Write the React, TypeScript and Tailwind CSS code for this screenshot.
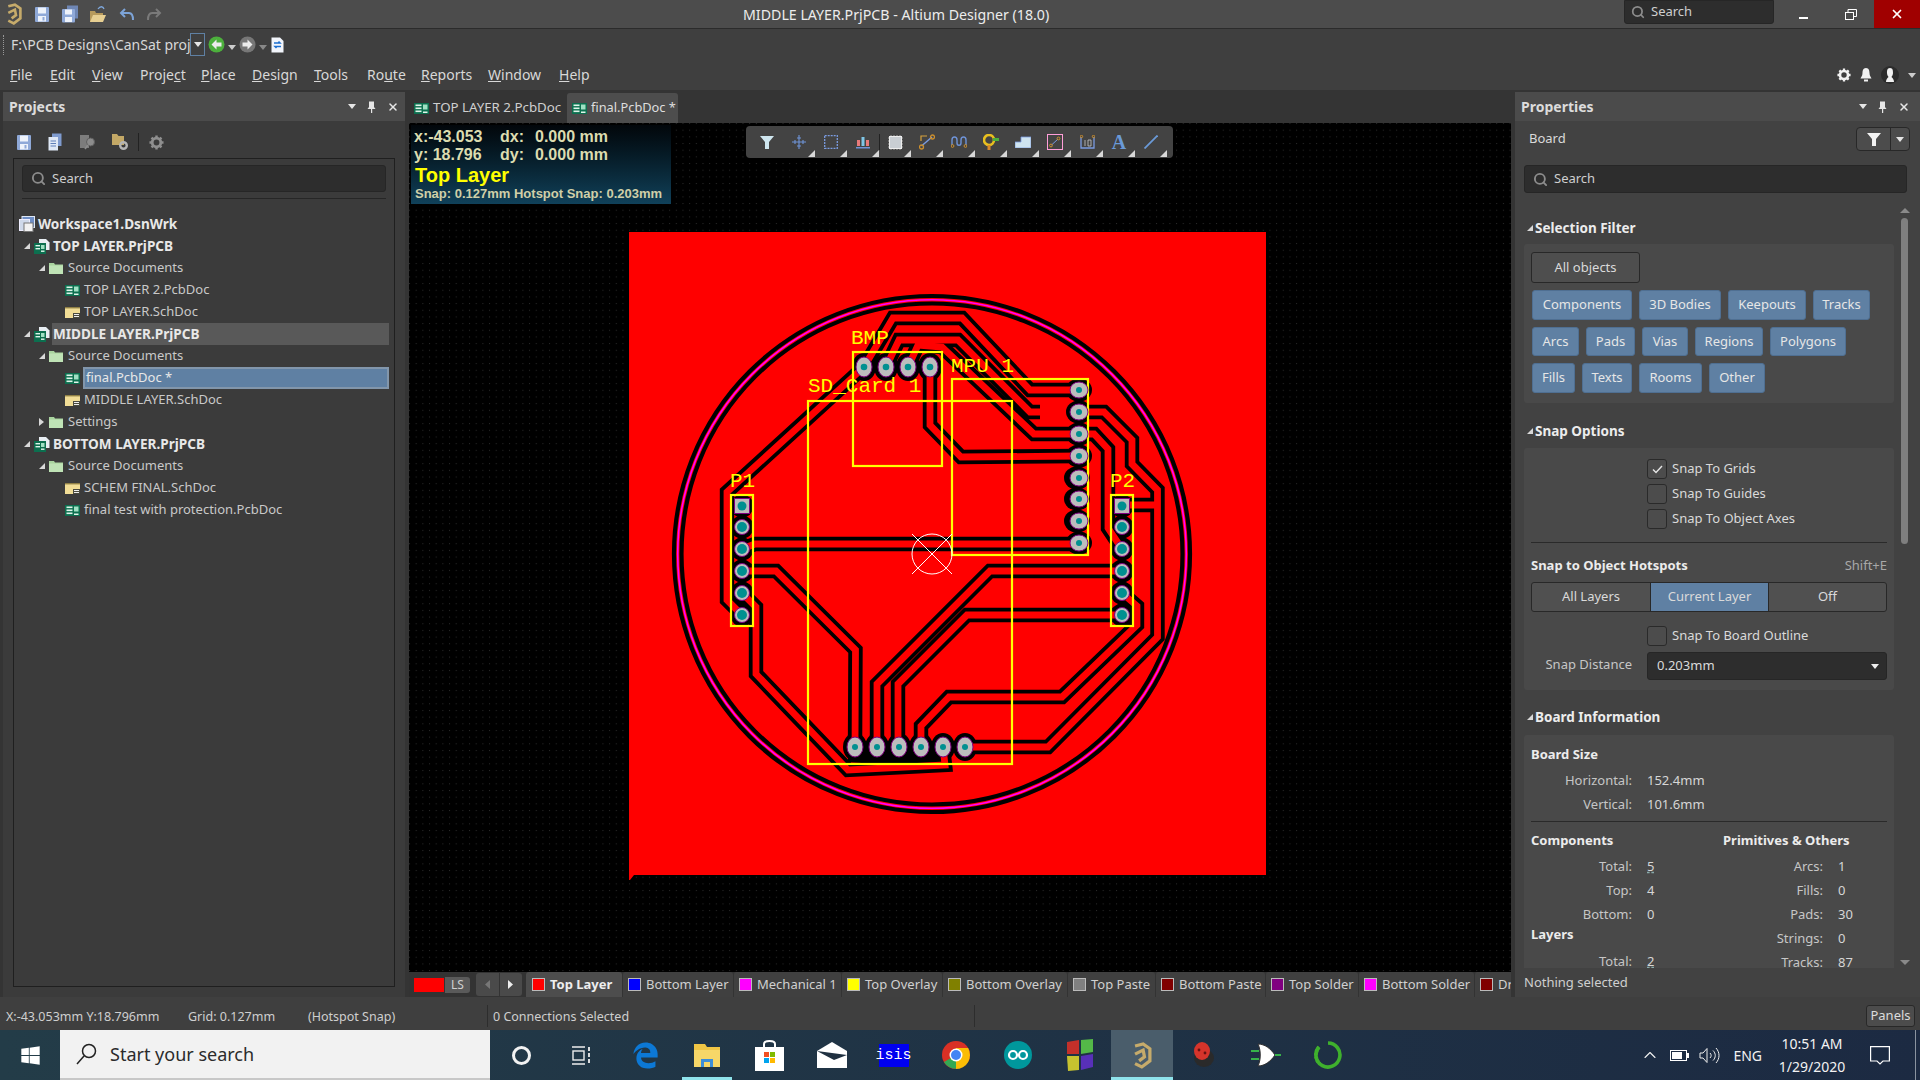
import React from "react";
import { FaEdgeLegacy, FaWindows } from "react-icons/fa6";
import { Search, X, ChevronUp } from "lucide-react";

const Tri = ({ c = "border-t-[#e6e6e6]" }: { c?: string }) => (
  <span className={`inline-block w-0 h-0 border-l-[4px] border-r-[4px] border-t-[5px] border-l-transparent border-r-transparent ${c}`} />
);
const Corner = () => (
  <svg width="7" height="7" className="shrink-0"><polygon points="7,0 7,7 0,7" fill="#d8d8d8" /></svg>
);

const Logo = ({ s = 20 }: { s?: number }) => (
  <svg width={s * 0.8} height={s} viewBox="0 0 16 20" fill="none" stroke="#c6ab6b" strokeWidth="2.4">
    <path d="M3 3 L9 1.5 L14 5 L14 14 L8 18.5 L3 16" />
    <path d="M3 9 L9 6 L10 11 L6 14" />
  </svg>
);
const Floppy = ({ c = "#8fa9d8" }: { c?: string }) => (
  <svg width="16" height="17" viewBox="0 0 16 17"><rect x="1" y="1" width="14" height="15" rx="1" fill={c} /><rect x="4" y="1.5" width="8" height="6" fill="#eef3fb" /><rect x="4" y="10" width="8" height="5.5" fill="#eef3fb" /><rect x="8.5" y="11" width="2" height="3.5" fill={c} /></svg>
);
const Floppies = () => (
  <svg width="18" height="18" viewBox="0 0 18 18"><rect x="6" y="0.5" width="11" height="13" fill="#6e86b4" /><rect x="1" y="4" width="13" height="13.5" rx="1" fill="#8fa9d8" /><rect x="4" y="4.5" width="7" height="5" fill="#eef3fb" /><rect x="4" y="12" width="7" height="5" fill="#eef3fb" /></svg>
);
const Docs = () => (
  <svg width="14" height="18" viewBox="0 0 14 18"><path d="M4 0.5H13.5V13H4Z" fill="#7f9bcf" /><path d="M0.5 4H10V17.5H0.5Z" fill="#dfe8f6" /><path d="M2.5 8H8M2.5 10.5H8M2.5 13H8" stroke="#5f7fb8" /></svg>
);
const GrayFind = () => (
  <svg width="16" height="16" viewBox="0 0 16 16"><path d="M0 1H9V14H0Z" fill="#7c7c7c" /><circle cx="10.5" cy="8" r="4" fill="#8c8c8c" stroke="#5f5f5f" /><path d="M8 11L5 15" stroke="#8c8c8c" strokeWidth="1.6" /></svg>
);
const FolderGear = () => (
  <svg width="17" height="18" viewBox="0 0 17 18"><path d="M0 1H5L6.5 3H12V12H0Z" fill="#c3a866" /><circle cx="11.5" cy="12.5" r="3.3" fill="none" stroke="#b5b5b5" strokeWidth="2.4" /></svg>
);
const OpenFolder = () => (
  <svg width="18" height="17" viewBox="0 0 18 17"><path d="M1 5h5l1 2h7v9H1z" fill="#b79a5c" /><path d="M4 9h13l-3 7H1z" fill="#e7cf92" /><path d="M9 3 C11 0 14 0 15 3" stroke="#7fa8dd" fill="none" strokeWidth="1.3" /></svg>
);
const Arrow = ({ c, flip }: { c: string; flip?: boolean }) => (
  <svg width="16" height="14" viewBox="0 0 16 14" className={flip ? "-scale-x-100" : ""} fill="none" stroke={c} strokeWidth="2"><path d="M6 2 L2 6 L6 10" /><path d="M2 6 H10 C13 6 14 9 14 13" /></svg>
);
const Round = ({ bg, flip }: { bg: string; flip?: boolean }) => (
  <svg width="17" height="17" viewBox="0 0 17 17" className={flip ? "-scale-x-100" : ""}><circle cx="8.5" cy="8.5" r="8" fill={bg} /><path d="M8.5 3.5 L3.5 8.5 L8.5 13.5 V10.5 H13.5 V6.5 H8.5Z" fill="#ececec" /></svg>
);
const RefreshDoc = () => (
  <svg width="13" height="16" viewBox="0 0 13 16"><path d="M0.5 0.5H9L12.5 4V15.5H0.5Z" fill="#f2f5fb" /><path d="M3 6H9L7.5 4.5M10 9.5H4L5.5 11" stroke="#1c6fd0" strokeWidth="1.5" fill="none" /></svg>
);
const Gear = ({ c = "#bdbdbd", s = 15 }: { c?: string; s?: number }) => (
  <svg width={s} height={s} viewBox="0 0 16 16"><circle cx="8" cy="8" r="4.6" fill="none" stroke={c} strokeWidth="3" /><g stroke={c} strokeWidth="2.6"><path d="M8 0.5V3M8 13V15.5M0.5 8H3M13 8H15.5M2.7 2.7L4.4 4.4M11.6 11.6L13.3 13.3M13.3 2.7L11.6 4.4M4.4 11.6L2.7 13.3" /></g></svg>
);
const Pin = () => (
  <svg width="9" height="12" viewBox="0 0 9 12"><path d="M2 0.5H7V6L8.5 8H0.5L2 6Z" fill="#e6e6e6" /><rect x="4" y="8" width="1.2" height="4" fill="#e6e6e6" /></svg>
);
const PanelControls = () => (
  <div className="flex items-center gap-[11px] text-[#e6e6e6]">
    <Tri />
    <Pin />
    <X size={12} strokeWidth={3} />
  </div>
);
const Pcb = () => (
  <svg width="15" height="11" viewBox="0 0 15 11" className="shrink-0"><rect width="15" height="11" fill="#0c6f4f" /><rect x="1.5" y="1.5" width="6" height="1.6" fill="#dff5ea" /><rect x="1.5" y="4.5" width="6" height="1.6" fill="#dff5ea" /><rect x="1.5" y="7.5" width="6" height="1.6" fill="#dff5ea" /><rect x="9" y="1.5" width="4.5" height="5" fill="#9fe0c3" /><rect x="9" y="8.5" width="4.5" height="1.5" fill="#dff5ea" /></svg>
);
const Sch = () => (
  <svg width="15" height="11" viewBox="0 0 15 11" className="shrink-0"><rect width="15" height="11" fill="#f1dd96" /><rect width="15" height="1.4" fill="#8f7f45" /><rect x="8" y="6" width="7" height="5" fill="#4a4a3e" /><rect x="9" y="7" width="5" height="1" fill="#eee" /><rect x="9" y="9" width="5" height="1" fill="#eee" /></svg>
);
const Folder = () => (
  <svg width="14" height="12" viewBox="0 0 14 12" className="shrink-0"><path d="M0 1H5L6 2.5H14V12H0Z" fill="#a9d49f" /><rect y="3.5" width="14" height="8.5" fill="#bfe3b6" /></svg>
);
const Proj = () => (
  <svg width="16" height="15" viewBox="0 0 16 15" className="shrink-0"><path d="M5 0H12L15.5 3.5V11H5Z" fill="#e8eef3" /><rect y="4" width="12" height="11" fill="#0c6f4f" /><rect x="1.5" y="6" width="4.5" height="1.4" fill="#dff5ea" /><rect x="1.5" y="9" width="4.5" height="1.4" fill="#dff5ea" /><rect x="7" y="6" width="3.5" height="4" fill="#9fe0c3" /><rect x="7" y="11.5" width="3.5" height="1.4" fill="#dff5ea" /></svg>
);
const Wks = () => (
  <svg width="16" height="16" viewBox="0 0 16 16" className="shrink-0"><rect x="3" y="0.5" width="12.5" height="11" fill="#6f8fc7" stroke="#dfe8f5" /><rect x="0.5" y="3.5" width="10" height="11" fill="#cfd9ea" stroke="#eef" /><rect x="5" y="7" width="9" height="8.5" fill="#f2f2f2" stroke="#777" /></svg>
);
const Exp = ({ open = true }: { open?: boolean }) =>
  open ? (
    <svg width="6" height="6" viewBox="0 0 6 6" className="shrink-0"><polygon points="6,0 6,6 0,6" fill="#d8d8d8" /></svg>
  ) : (
    <svg width="5" height="8" viewBox="0 0 5 8" className="shrink-0"><polygon points="0,0 5,4 0,8" fill="#d8d8d8" /></svg>
  );

const Row = ({ pl, arrow, icon, text, bold, cls = "", open = true }: { pl: string; arrow?: boolean; icon: React.ReactNode; text: string; bold?: boolean; cls?: string; open?: boolean }) => (
  <div className={`flex h-[22px] items-center -ml-[3px] ${pl}`}>
    {arrow && <span className="flex w-[15px] justify-center"><Exp open={open} /></span>}
    <span className="flex w-[18px] shrink-0">{icon}</span>
    <span className={`flex-1 h-full flex items-center pl-[1px] -mr-[3px] whitespace-nowrap ${bold ? "font-bold text-[13.6px] text-[#e8e8e8]" : "text-[#c9c9c9]"} ${cls}`}>{text}</span>
  </div>
);

const SearchBox = ({ cls }: { cls: string }) => (
  <div className={`flex items-center rounded-[3px] bg-[#2d2d2d] border border-[#262626] text-[#cfcfcf] ${cls}`}>
    <Search size={15} strokeWidth={3} className="text-[#8c8c8c] ml-[8px] mr-[6px]" />
    Search
  </div>
);

const LeftPanel = () => (
  <div className="w-[409px] shrink-0 pl-[3px] pr-[4px] pt-[2px] pb-0 flex flex-col">
    <div className="h-[29px] bg-[#4b4b4b] flex items-center justify-between pl-[6px] pr-[6px]">
      <span className="font-bold text-[14px] text-[#dcdcdc]">Projects</span>
      <PanelControls />
    </div>
    <div className="flex-1 bg-[#3b3b3b] flex flex-col px-[10px] pb-[10px]">
      <div className="h-[37px] pt-[5px] shrink-0 flex items-center relative">
        <span className="absolute left-[3px] top-[13px]"><Floppy /></span>
        <span className="absolute left-[35px] top-[12px]"><Docs /></span>
        <span className="absolute left-[67px] top-[13px]"><GrayFind /></span>
        <span className="absolute left-[99px] top-[12px]"><FolderGear /></span>
        <span className="absolute left-[125px] top-[12px] w-px h-[18px] bg-[#222]" />
        <span className="absolute left-[136px] top-[14px]"><Gear c="#8f8f8f" /></span>
      </div>
      <div className="flex-1 border border-[#1f1f1f] flex flex-col px-[8px]">
        <SearchBox cls="h-[27px] mt-[6px] text-[13px] shrink-0" />
        <div className="h-px bg-[#262626] mt-[6px] mb-[14px] shrink-0" />
        <Row pl="" icon={<Wks />} text="Workspace1.DsnWrk" bold cls="pl-[0px]" />
        <Row pl="" arrow icon={<Proj />} text="TOP LAYER.PrjPCB" bold />
        <Row pl="pl-[15px]" arrow icon={<Folder />} text="Source Documents" />
        <Row pl="pl-[46px]" icon={<Pcb />} text="TOP LAYER 2.PcbDoc" />
        <Row pl="pl-[46px]" icon={<Sch />} text="TOP LAYER.SchDoc" />
        <Row pl="" arrow icon={<Proj />} text="MIDDLE LAYER.PrjPCB" bold cls="bg-[#595959]" />
        <Row pl="pl-[15px]" arrow icon={<Folder />} text="Source Documents" />
        <Row pl="pl-[46px]" icon={<Pcb />} text="final.PcbDoc *" cls="bg-[#5f80a3] border-2 border-[#8296ab] text-[#e8e8e8]" />
        <Row pl="pl-[46px]" icon={<Sch />} text="MIDDLE LAYER.SchDoc" />
        <Row pl="pl-[15px]" arrow open={false} icon={<Folder />} text="Settings" />
        <Row pl="" arrow icon={<Proj />} text="BOTTOM LAYER.PrjPCB" bold />
        <Row pl="pl-[15px]" arrow icon={<Folder />} text="Source Documents" />
        <Row pl="pl-[46px]" icon={<Sch />} text="SCHEM FINAL.SchDoc" />
        <Row pl="pl-[46px]" icon={<Pcb />} text="final test with protection.PcbDoc" />
      </div>
    </div>
  </div>
);

const tracks = [
  "742,615 727,600 727,492 864,367",
  "864,367 893,318 962,318 1030,390 1079,390",
  "886,367 899,340 958,340 1030,412 1040,412",
  "908,367 918,345 942,347 1034,434 1079,434",
  "930,367 930,425 961,457 1079,456",
  "742,549 755,544 1079,544",
  "742,571 776,571 855.5,650 855,747",
  "742,593 756,607 756,674 848,770 945,765 943,747",
  "877,747 877,684 990,571 1122,571",
  "898,747 898,684 967,615 1122,615",
  "921,747 921,726 949,697 1062,697 1137,625 1137,606 1122,593",
  "965,747 1048,747 1157.5,637 1157.5,490 1132,464 1132,440 1104,412 1079,412",
  "1122,505 1157,505",
  "1079,434 1094,434 1108,449 1108,528 1122,549",
];
const bmp = [864, 886, 908, 930];
const mpu = [390, 412, 434, 456, 478, 499, 521, 543];
const hdr = [527, 549, 571, 593, 615];
const bot = [855, 877, 899, 921, 943, 965];

const Ell = ({ x, y, rx, ry, h }: { x: number; y: number; rx: number; ry: number; h: number }) => (
  <g>
    <ellipse cx={x} cy={y} rx={rx} ry={ry} fill="#bdbdbd" stroke="#800080" strokeWidth="1" />
    <circle cx={x} cy={y} r={h} fill="#009090" />
  </g>
);
const Sq = ({ x, y }: { x: number; y: number }) => (
  <g>
    <rect x={x - 7.5} y={y - 7.5} width="15" height="15" fill="#bdbdbd" stroke="#800080" strokeWidth="1" />
    <circle cx={x} cy={y} r="4.5" fill="#009090" />
  </g>
);

const Board = () => (
  <svg width="1102" height="849" viewBox="409 123 1102 849" className="block">
    <defs>
      <pattern id="dots" width="6.67" height="6.67" patternUnits="userSpaceOnUse" x="409" y="123">
        <rect width="1" height="1" fill="#2a2a2a" />
      </pattern>
    </defs>
    <rect x="409" y="123" width="1102" height="849" fill="#000" />
    <rect x="409" y="123" width="1102" height="849" fill="url(#dots)" />
    <polygon points="629,232 1266,232 1266,875 634,875 630,880 629,880" fill="#ff0000" />
    <circle cx="932" cy="554" r="258" fill="none" stroke="#000" strokeWidth="4.2" />
    <circle cx="932" cy="554" r="250.5" fill="none" stroke="#000" strokeWidth="4.2" />
    <circle cx="932" cy="554" r="254.3" fill="none" stroke="#ff00ff" strokeWidth="1.6" />
    {bmp.map((x) => <ellipse key={x} cx={x} cy={367} rx="12" ry="14" fill="#000" />)}
    {mpu.map((y) => <ellipse key={y} cx={y > 470 && y < 530 ? 1077 : 1079} cy={y} rx="13" ry="11.5" fill="#000" />)}
    {[506, ...hdr].map((y) => <g key={y}><circle cx="742" cy={y} r="11.5" fill="#000" /><circle cx="1122" cy={y} r="11.5" fill="#000" /></g>)}
    {bot.map((x) => <ellipse key={x} cx={x} cy={747} rx="12" ry="14" fill="#000" />)}
    <rect x="848" y="750" width="100" height="12" fill="#000" />
    {tracks.map((t) => <polyline key={t} points={t} fill="none" stroke="#000" strokeWidth="14.4" strokeLinejoin="miter" />)}
    {tracks.map((t) => <polyline key={t + "r"} points={t} fill="none" stroke="#ff0000" strokeWidth="6.8" strokeLinejoin="miter" />)}
    <g fill="none" stroke="#ffff00" strokeWidth="2.2">
      <rect x="853" y="352" width="89" height="114" />
      <rect x="952" y="379" width="136" height="176" />
      <rect x="808" y="401" width="204" height="363" />
      <rect x="731" y="495" width="22" height="131" />
      <rect x="1111" y="495" width="22" height="131" />
    </g>
    {bmp.map((x) => <Ell key={x} x={x} y={367} rx={8} ry={10} h={3.3} />)}
    {mpu.map((y) => <Ell key={y} x={1079} y={y} rx={9} ry={8} h={3} />)}
    {hdr.map((y) => <g key={y}><Ell x={742} y={y} rx={7.5} ry={7.5} h={5} /><Ell x={1122} y={y} rx={7.5} ry={7.5} h={5} /></g>)}
    <Sq x={742} y={506} />
    <Sq x={1122} y={506} />
    {bot.map((x) => <Ell key={x} x={x} y={747} rx={8} ry={10} h={3} />)}
    <g stroke="#fff" strokeWidth="1" fill="none">
      <circle cx="932" cy="554" r="20" />
      <path d="M912 534L952 574M952 534L912 574" />
    </g>
    <g fill="#ffff00" className="font-['Liberation_Mono',monospace] text-[21px]">
      <text x="851" y="344">BMP</text>
      <text x="808" y="392">SD_Card 1</text>
      <text x="951" y="372">MPU 1</text>
      <text x="730" y="487">P1</text>
      <text x="1110" y="487">P2</text>
    </g>
  </svg>
);

const ToolIcon = ({ children }: { children: React.ReactNode }) => (
  <div className="relative w-[32px] shrink-0 h-[32px] flex items-center justify-center">
    {children}
    <span className="absolute right-0 bottom-[1px]"><Corner /></span>
  </div>
);

const Toolbar = () => (
  <div className="absolute left-[337px] top-[3px] w-[427px] h-[32px] rounded-[4px] bg-[#434343] flex pl-[5px]">
    <div className="w-[32px] h-[32px] flex items-center justify-center"><svg width="14" height="13" viewBox="0 0 14 13"><path d="M0 0H14L9 6V13H5V6Z" fill="#cfe6ef" /></svg></div>
    <ToolIcon><svg width="14" height="14" viewBox="0 0 14 14" stroke="#6f94d8" strokeWidth="1.1"><path d="M7 0V14M0 7H14" /><path d="M5 3H9M5 11H9M3 5V9M11 5V9" /></svg></ToolIcon>
    <ToolIcon><svg width="14" height="14" viewBox="0 0 14 14" fill="none" stroke="#7a9be0" strokeWidth="1.3" strokeDasharray="2 1"><rect x="0.7" y="0.7" width="12.6" height="12.6" /></svg></ToolIcon>
    <ToolIcon><svg width="14" height="13" viewBox="0 0 14 13"><rect x="1" y="4" width="3" height="6" fill="#e87a7a" /><rect x="5.5" y="1" width="3" height="9" fill="#7fc6e6" /><rect x="10" y="4" width="3" height="6" fill="#e87a7a" /><rect y="11" width="14" height="1.5" fill="#6f94d8" /></svg></ToolIcon>
    <div className="w-px -mr-px h-[16px] bg-[#222] self-center" />
    <ToolIcon><svg width="15" height="15" viewBox="0 0 15 15"><rect x="1.5" y="1.5" width="12" height="12" fill="#c9ced3" stroke="#eee" /><path d="M3 0V15M6 0V15M9 0V15M12 0V15M0 3H15M0 6H15M0 9H15M0 12H15" stroke="#eee" strokeWidth="0.6" strokeDasharray="1.5 12" /></svg></ToolIcon>
    <ToolIcon><svg width="16" height="16" viewBox="0 0 16 16" fill="none"><path d="M2.5 12L13 3" stroke="#7a9be0" strokeWidth="1.5" /><circle cx="2.5" cy="13" r="2" stroke="#cc8f2d" strokeWidth="1.3" /><circle cx="13.5" cy="3" r="2" stroke="#cc8f2d" strokeWidth="1.3" /><path d="M2 7V2H8" stroke="#d8a23c" strokeWidth="1.2" /></svg></ToolIcon>
    <ToolIcon><svg width="16" height="12" viewBox="0 0 16 12" fill="none"><path d="M1 9V4C1 0 6 0 6 4V7C6 10 10 10 10 7V4C10 0 15 0 15 4V9" stroke="#6f94d8" strokeWidth="1.4" /><circle cx="1.5" cy="10" r="1.4" stroke="#cc8f2d" /><circle cx="14.5" cy="10" r="1.4" stroke="#cc8f2d" /></svg></ToolIcon>
    <ToolIcon><svg width="16" height="16" viewBox="0 0 16 16"><circle cx="6" cy="6" r="5" fill="none" stroke="#e8bf1f" strokeWidth="2.6" /><rect x="10" y="4" width="6" height="3" fill="#4caf3c" /><rect x="4.5" y="11" width="3" height="5" fill="#d98a2b" /></svg></ToolIcon>
    <ToolIcon><svg width="16" height="12" viewBox="0 0 16 12"><path d="M0 12V6H6V1H16V12Z" fill="#cfe4ef" stroke="#7a9be0" strokeWidth="0.8" /></svg></ToolIcon>
    <ToolIcon><svg width="16" height="16" viewBox="0 0 16 16" fill="none"><rect x="0.5" y="0.5" width="15" height="15" stroke="#ff9ed8" /><path d="M4.5 11L11 5" stroke="#7a9be0" /><circle cx="4" cy="11.5" r="1.4" stroke="#cc8f2d" /><circle cx="11.5" cy="4.5" r="1.4" stroke="#cc8f2d" /></svg></ToolIcon>
    <ToolIcon><svg width="15" height="14" viewBox="0 0 15 14" fill="none"><path d="M1 2V13H14V2" stroke="#7a9be0" strokeWidth="1.3" /><circle cx="1.5" cy="1.5" r="1.2" stroke="#cc8f2d" /><circle cx="13.5" cy="1.5" r="1.2" stroke="#cc8f2d" /><path d="M5 5V11M8 5H11V11H8Z" stroke="#c8c8c8" strokeWidth="0.8" /></svg></ToolIcon>
    <ToolIcon><span className="font-['Liberation_Serif',serif] font-bold text-[20px] leading-none text-[#6a9ad8]">A</span></ToolIcon>
    <ToolIcon><svg width="14" height="14" viewBox="0 0 14 14"><path d="M0.5 13.5L13.5 0.5" stroke="#6a9ad8" strokeWidth="1.8" /></svg></ToolIcon>
  </div>
);

const InfoBox = () => (
  <div className="absolute left-[2px] top-[2px] w-[260px] h-[79px] bg-gradient-to-b from-[#02070b] to-[#10415a] pl-[3px] font-['Liberation_Sans',sans-serif] font-bold text-[#dcdcb0] text-[16px] leading-[17.5px] pt-[3px] whitespace-nowrap">
    <div className="flex"><span className="w-[86px]">x:-43.053</span><span className="w-[35px]">dx:</span><span>0.000 mm</span></div>
    <div className="flex"><span className="w-[86px]">y: 18.796</span><span className="w-[35px]">dy:</span><span>0.000 mm</span></div>
    <div className="text-[20px] leading-[22px] text-[#ffff00] mt-[1px] pl-[1px]">Top Layer</div>
    <div className="text-[13px] leading-[15px] pl-[1px] text-[#cfcfa8]">Snap: 0.127mm Hotspot Snap: 0.203mm</div>
  </div>
);

const layers = [
  { t: "Bottom Layer", c: "bg-[#0000ff]", w: "w-[111px]" },
  { t: "Mechanical 1", c: "bg-[#ff00ff]", w: "w-[108px]" },
  { t: "Top Overlay", c: "bg-[#ffff00]", w: "w-[101px]" },
  { t: "Bottom Overlay", c: "bg-[#808000]", w: "w-[125px]" },
  { t: "Top Paste", c: "bg-[#808080]", w: "w-[88px]" },
  { t: "Bottom Paste", c: "bg-[#800000]", w: "w-[110px]" },
  { t: "Top Solder", c: "bg-[#800080]", w: "w-[93px]" },
  { t: "Bottom Solder", c: "bg-[#ff00ff]", w: "w-[116px]" },
  { t: "Drill Guide", c: "bg-[#800000]", w: "w-[100px]" },
];

const Center = () => (
  <div className="w-[1102px] shrink-0 flex flex-col overflow-hidden">
    <div className="h-[33px] flex items-end text-[13px] text-[#cfcfcf]">
      <div className="w-[158px] h-[30px] flex items-center pl-[5px] gap-[4px] whitespace-nowrap text-[13.3px]"><Pcb />TOP LAYER 2.PcbDoc</div>
      <div className="w-[111px] h-[30px] flex items-center pl-[5px] gap-[4px] whitespace-nowrap bg-[#4d4d4d] rounded-t-[3px] text-[#dedede] text-[12.8px]"><Pcb />final.PcbDoc *</div>
    </div>
    <div className="relative h-[849px]">
      <Board />
      <InfoBox />
      <Toolbar />
    </div>
    <div className="h-[25px] flex items-stretch text-[13px] text-[#d0d0d0] bg-[#333]">
      <div className="w-[4px] shrink-0" />
      <div className="flex h-[16px] self-center shrink-0">
        <div className="w-[32px] bg-[#ff0000] border border-[#333]" />
        <div className="w-[25px] bg-[#5a5a5a] rounded-r-[3px] flex items-center justify-center text-[12px]">LS</div>
      </div>
      <div className="w-[6px] shrink-0" />
      <div className="w-[46px] shrink-0 bg-[#4a4a4a] rounded-[3px] flex my-[1px]">
        <div className="flex-1 flex items-center justify-center border-r border-[#333]"><svg width="5" height="9"><polygon points="5,0 5,9 0,4.5" fill="#777" /></svg></div>
        <div className="flex-1 flex items-center justify-center"><svg width="5" height="9"><polygon points="0,0 0,9 5,4.5" fill="#eee" /></svg></div>
      </div>
      <div className="w-[4px] shrink-0" />
      <div className="w-[96px] bg-[#4d4d4d] rounded-t-[3px] flex items-center pl-[6px] gap-[5px] font-bold text-[#eee] whitespace-nowrap shrink-0">
        <span className="w-[13px] h-[13px] bg-[#ff0000] border border-[#bbb]" />Top Layer
      </div>
      {layers.map((l) => (
        <div key={l.t} className={`${l.w} shrink-0 bg-[#404040] border-l border-[#333] rounded-t-[3px] flex items-center pl-[5px] gap-[5px] whitespace-nowrap`}>
          <span className={`w-[13px] h-[13px] border border-[#bbb] shrink-0 ${l.c}`} />{l.t}
        </div>
      ))}
    </div>
  </div>
);

const Chip = ({ t, w }: { t: string; w: string }) => (
  <div className={`${w} h-full rounded-[3px] bg-[#5f80a3] border border-[#4f6f92] flex items-center justify-center text-[#e6e6e6]`}>{t}</div>
);
const Head = ({ t, cls }: { t: string; cls: string }) => (
  <div className={`flex items-center h-[20px] pl-[12px] font-bold text-[13.5px] text-[#ececec] ${cls}`}>
    <span className="mr-[2px]"><Exp /></span>{t}
  </div>
);
const Check = ({ on, t, cls = "" }: { on?: boolean; t: string; cls?: string }) => (
  <div className={`flex items-center h-[20px] pl-[123px] gap-[5px] ${cls}`}>
    <span className="w-[20px] h-[20px] rounded-[3px] border border-[#2a2a2a] bg-[#4c4c4c] flex items-center justify-center">
      {on && <svg width="11" height="9" viewBox="0 0 11 9" fill="none" stroke="#e6e6e6" strokeWidth="1.4"><path d="M1 4.5L4 7.5L10 1" /></svg>}
    </span>
    {t}
  </div>
);
const KV = ({ k, v, u, w, cls = "" }: { k: string; v: string; u?: boolean; w: string; cls?: string }) => (
  <div className={`flex h-[24px] items-center ${cls}`}>
    <span className={`${w} text-right text-[#c6c6c6]`}>{k}</span>
    <span className={`ml-[15px] text-[#d6d6d6] ${u ? "underline decoration-dashed decoration-[#88aaaa]" : ""}`}>{v}</span>
  </div>
);

const RightPanel = () => (
  <div className="flex-1 pl-[4px] pt-[2px] flex flex-col min-w-0">
    <div className="h-[29px] bg-[#4b4b4b] flex items-center justify-between pl-[6px] pr-[10px] shrink-0">
      <span className="font-bold text-[14px] text-[#dcdcdc]">Properties</span>
      <PanelControls />
    </div>
    <div className="flex-1 bg-[#424242] flex flex-col min-h-0 text-[13px] text-[#dadada]">
      <div className="h-[36px] shrink-0 flex items-center justify-between pl-[14px] pr-[10px]">
        <span>Board</span>
        <div className="flex w-[54px] h-[24px] rounded-[4px] border border-[#282828] bg-[#4c4c4c]">
          <div className="flex-1 flex items-center justify-center border-r border-[#282828]"><svg width="14" height="13" viewBox="0 0 14 13"><path d="M0 0H14L9 6V13H5V6Z" fill="#f2f2f2" /></svg></div>
          <div className="w-[18px] flex items-center justify-center"><Tri /></div>
        </div>
      </div>
      <SearchBox cls="h-[28px] mt-[8px] ml-[9px] mr-[13px] shrink-0" />
      <div className="relative flex-1 min-h-0 overflow-hidden">
        <svg width="10" height="5" className="absolute right-[10px] top-[15px]"><polygon points="5,0 10,5 0,5" fill="#8a8a8a" /></svg>
        <div className="absolute right-[12px] top-[25px] w-[7px] h-[326px] rounded-[4px] bg-[#7f7f7f]" />
        <svg width="10" height="5" className="absolute right-[10px] bottom-[3px]"><polygon points="0,0 10,0 5,5" fill="#8a8a8a" /></svg>

        <Head t="Selection Filter" cls="mt-[25px]" />
        <div className="mt-[6px] ml-[9px] w-[370px] h-[159px] bg-[#494949] rounded-[3px] pt-[8px] pl-[7px] flex flex-col">
          <div className="w-[109px] h-[31px] shrink-0 rounded-[3px] border border-[#282828] bg-[#4e4e4e] flex items-center justify-center">All objects</div>
          <div className="flex gap-[7px] h-[30px] mt-[7px] pl-[1px]"><Chip t="Components" w="w-[100px]" /><Chip t="3D Bodies" w="w-[82px]" /><Chip t="Keepouts" w="w-[78px]" /><Chip t="Tracks" w="w-[57px]" /></div>
          <div className="flex gap-[7px] h-[29px] mt-[7px] pl-[1px]"><Chip t="Arcs" w="w-[47px]" /><Chip t="Pads" w="w-[49px]" /><Chip t="Vias" w="w-[46px]" /><Chip t="Regions" w="w-[68px]" /><Chip t="Polygons" w="w-[76px]" /></div>
          <div className="flex gap-[7px] h-[30px] mt-[7px] pl-[1px]"><Chip t="Fills" w="w-[43px]" /><Chip t="Texts" w="w-[50px]" /><Chip t="Rooms" w="w-[63px]" /><Chip t="Other" w="w-[56px]" /></div>
        </div>

        <Head t="Snap Options" cls="mt-[18px]" />
        <div className="mt-[7px] ml-[9px] w-[370px] h-[242px] bg-[#494949] rounded-[3px] pt-[11px] flex flex-col">
          <Check on t="Snap To Grids" />
          <Check t="Snap To Guides" cls="mt-[5px]" />
          <Check t="Snap To Object Axes" cls="mt-[5px]" />
          <div className="h-px bg-[#2a2a2a] mx-[7px] mt-[13px]" />
          <div className="flex justify-between items-center h-[20px] mt-[13px] mx-[7px]"><span className="font-bold text-[#ececec]">Snap to Object Hotspots</span><span className="text-[#a8a8a8]">Shift+E</span></div>
          <div className="flex h-[30px] mx-[7px] mt-[6px] rounded-[3px] border border-[#282828] bg-[#505050] overflow-hidden">
            <div className="w-[119px] flex items-center justify-center border-r border-[#282828]">All Layers</div>
            <div className="w-[117px] flex items-center justify-center bg-[#5f80a3]">Current Layer</div>
            <div className="flex-1 flex items-center justify-center border-l border-[#282828]">Off</div>
          </div>
          <Check t="Snap To Board Outline" cls="mt-[14px]" />
          <div className="flex items-center h-[28px] mt-[6px]">
            <span className="w-[108px] text-right text-[#c6c6c6] pb-[3px]">Snap Distance</span>
            <div className="ml-[15px] w-[240px] h-full rounded-[3px] bg-[#2d2d2d] border border-[#262626] flex items-center justify-between pl-[9px] pr-[7px]">0.203mm<Tri c="border-t-[#eeeeee]" /></div>
          </div>
        </div>

        <Head t="Board Information" cls="mt-[17px]" />
        <div className="mt-[8px] ml-[9px] w-[370px] h-[300px] bg-[#494949] rounded-[3px] pt-[10px] flex flex-col">
          <div className="font-bold text-[#ececec] pl-[7px] h-[20px] flex items-center">Board Size</div>
          <KV k="Horizontal:" v="152.4mm" w="w-[108px]" cls="mt-[4px]" />
          <KV k="Vertical:" v="101.6mm" w="w-[108px]" />
          <div className="h-px bg-[#2a2a2a] mx-[7px] mt-[4px]" />
          <div className="flex mt-[9px]">
            <div className="w-[199px] flex flex-col">
              <div className="font-bold text-[#ececec] pl-[7px] h-[20px] flex items-center mb-[4px]">Components</div>
              <KV k="Total:" v="5" u w="w-[108px]" />
              <KV k="Top:" v="4" w="w-[108px]" />
              <KV k="Bottom:" v="0" w="w-[108px]" />
              <div className="font-bold text-[#ececec] pl-[7px] h-[20px] flex items-center mt-[-2px] mb-[5px]">Layers</div>
              <KV k="Total:" v="2" u w="w-[108px]" />
            </div>
            <div className="flex-1 flex flex-col">
              <div className="font-bold text-[#ececec] h-[20px] flex items-center mb-[4px] whitespace-nowrap">Primitives &amp; Others</div>
              <KV k="Arcs:" v="1" w="w-[100px]" />
              <KV k="Fills:" v="0" w="w-[100px]" />
              <KV k="Pads:" v="30" w="w-[100px]" />
              <KV k="Strings:" v="0" w="w-[100px]" />
              <KV k="Tracks:" v="87" w="w-[100px]" />
            </div>
          </div>
        </div>
      </div>
      <div className="h-[29px] shrink-0 bg-[#424242] flex items-center pl-[9px] text-[#cfcfcf] relative">Nothing selected</div>
    </div>
  </div>
);

const menus = [
  ["", "F", "ile", "w-[40px]"],
  ["", "E", "dit", "w-[42px]"],
  ["", "V", "iew", "w-[48px]"],
  ["Proje", "c", "t", "w-[61px]"],
  ["", "P", "lace", "w-[51px]"],
  ["", "D", "esign", "w-[62px]"],
  ["", "T", "ools", "w-[53px]"],
  ["Ro", "u", "te", "w-[54px]"],
  ["", "R", "eports", "w-[67px]"],
  ["", "W", "indow", "w-[71px]"],
  ["", "H", "elp", "w-[40px]"],
];

const Title = () => (
  <div className="h-[29px] bg-[#4c4c4c] border-b border-[#2b2b2b] flex items-center relative shrink-0">
    <div className="w-[32px] flex justify-center pr-[4px]"><Logo s={22} /></div>
    <div className="flex items-center">
      <span className="w-[20px] flex justify-center"><Floppy /></span>
      <span className="w-[8px]" />
      <span className="w-[20px] flex justify-center"><Floppies /></span>
      <span className="w-[8px]" />
      <span className="w-[20px] flex justify-center"><OpenFolder /></span>
      <span className="w-[9px]" />
      <span className="w-[20px] flex justify-center"><Arrow c="#7da4d8" /></span>
      <span className="w-[7px]" />
      <span className="w-[20px] flex justify-center"><Arrow c="#7a7a7a" flip /></span>
    </div>
    <div className="absolute left-[743px] top-[4px] text-[14.2px] text-[#ececec] whitespace-nowrap">MIDDLE LAYER.PrjPCB - Altium Designer (18.0)</div>
    <div className="ml-auto flex items-center h-full">
      <div className="w-[150px] h-[24px] self-start rounded-b-[3px] bg-[#2d2d2d] border border-[#262626] flex items-center text-[13px] text-[#cfcfcf]">
        <Search size={14} strokeWidth={3} className="text-[#8c8c8c] ml-[6px] mr-[6px]" />Search
      </div>
      <div className="w-[8px]" />
      <div className="w-[46px] flex justify-center pt-[8px] pr-[3px]"><span className="w-[9px] h-[2px] bg-white" /></div>
      <div className="w-[46px] flex justify-center"><svg width="12" height="11" viewBox="0 0 12 11" fill="none" stroke="#fff"><rect x="0.5" y="3.5" width="8" height="7" /><path d="M3 3V0.5H11.5V7.5H9" /></svg></div>
      <div className="w-[46px] h-full bg-[#a00000] flex items-center justify-center"><X size={14} strokeWidth={3} className="text-white" /></div>
    </div>
  </div>
);

const PathBar = () => (
  <div className="h-[31px] bg-[#3f3f3f] flex items-center shrink-0 text-[14px] text-[#d8d8d8]">
    <div className="w-px h-[20px] border-l border-dotted border-[#999] ml-[3px]" />
    <span className="ml-[7px] w-[179px] overflow-hidden whitespace-nowrap">F:\PCB Designs\CanSat proj</span>
    <span className="w-[15px] h-[23px] border border-[#5f80a3] flex items-center justify-center"><Tri /></span>
    <span className="ml-[3px]"><Round bg="#4caf3c" /></span>
    <span className="ml-[3px]"><Tri c="border-t-[#cccccc]" /></span>
    <span className="ml-[3px]"><Round bg="#777777" flip /></span>
    <span className="ml-[3px]"><Tri c="border-t-[#888888]" /></span>
    <span className="ml-[4px]"><RefreshDoc /></span>
  </div>
);

const MenuBar = () => (
  <div className="h-[30px] bg-[#3f3f3f] flex items-center shrink-0 pl-[10px] text-[14px] text-[#d8d8d8]">
    {menus.map((m) => (
      <span key={m[1] + m[2]} className={`${m[3]} pb-[2px]`}>{m[0]}<u>{m[1]}</u>{m[2]}</span>
    ))}
    <div className="ml-auto flex items-center gap-[9px] pr-[4px]">
      <Gear c="#f2f2f2" s={14} />
      <svg width="12" height="14" viewBox="0 0 12 14"><path d="M6 0C3 0 2.5 3 2.5 5C2.5 8 1 9 0.5 10.5H11.5C11 9 9.5 8 9.5 5C9.5 3 9 0 6 0Z" fill="#f2f2f2" /><rect x="4" y="11.5" width="4" height="2" fill="#f2f2f2" /></svg>
      <svg width="18" height="18" viewBox="0 0 18 18"><circle cx="9" cy="9" r="9" fill="#2c2c2c" /><path d="M9 2C6 2 6 5 6 7C6 9 7 10 7.5 11C6 12 5 14 5 16H13C13 14 12 12 10.5 11C11 10 12 9 12 7C12 5 12 2 9 2Z" fill="#f2f2f2" /></svg>
      <Tri c="border-t-[#cccccc]" />
    </div>
  </div>
);

const Status = () => (
  <div className="h-[33px] bg-[#3f3f3f] flex items-center shrink-0 text-[12.5px] text-[#cfcfcf] pt-[4px]">
    <span className="ml-[6px] w-[182px] whitespace-nowrap pt-[3px]">X:-43.053mm Y:18.796mm</span>
    <span className="w-[120px] whitespace-nowrap pt-[3px]">Grid: 0.127mm</span>
    <span className="w-[179px] whitespace-nowrap pt-[3px]">(Hotspot Snap)</span>
    <span className="w-px h-[22px] bg-[#2d2d2d]" />
    <span className="ml-[5px] w-[481px] whitespace-nowrap pt-[3px]">0 Connections Selected</span>
    <span className="w-px h-[22px] bg-[#2d2d2d]" />
    <div className="ml-auto mr-[5px] w-[49px] h-[22px] rounded-[3px] bg-[#4c4c4c] border border-[#282828] flex items-center justify-center text-[13px] text-[#dcdcdc]">Panels</div>
  </div>
);

const Cell = ({ children, active, bar }: { children: React.ReactNode; active?: boolean; bar?: boolean }) => (
  <div className={`w-[62.1px] h-full flex items-center justify-center relative shrink-0 ${active ? "bg-[#4a5d6b]" : ""}`}>
    {children}
    {bar && <span className="absolute left-[6px] right-[6px] bottom-0 h-[3px] bg-[#8fe3ec]" />}
    {active && <span className="absolute left-0 right-0 bottom-0 h-[3px] bg-[#8fe3ec]" />}
  </div>
);

const Taskbar = () => (
  <div className="h-[50px] bg-gradient-to-r from-[#233c48] to-[#1c2a42] flex items-stretch shrink-0 text-white">
    <div className="w-[60px] flex items-center justify-center"><FaWindows size={21} /></div>
    <div className="w-[430px] bg-[#f2f2f2] border-b-2 border-[#c8c8c8] flex items-center pl-[14px] gap-[12px] text-[18px] text-[#2b2b2b]">
      <svg width="24" height="24" viewBox="0 0 24 24" fill="none" stroke="#222" strokeWidth="1.5"><circle cx="15" cy="9" r="6.5" /><path d="M10 14L3 22" /></svg>
      <span>Start your search</span>
    </div>
    <Cell><span className="w-[19px] h-[19px] rounded-full border-[3px] border-[#f2f2f2]" /></Cell>
    <Cell><span className="pr-[5px] flex"><svg width="20" height="19" viewBox="0 0 20 19" fill="none" stroke="#eee" strokeWidth="1.4"><path d="M1 1H14M1 18H14" /><rect x="2" y="5" width="11" height="9" /><path d="M18 1V5M18 7V11M18 13V17" strokeWidth="1.8" /></svg></span></Cell>
    <Cell><FaEdgeLegacy size={27} className="text-[#0c78d5]" /></Cell>
    <Cell bar><svg width="28" height="26" viewBox="0 0 28 26"><path d="M1 2H12L14 5H27V25H1Z" fill="#f0c645" /><rect x="1" y="8" width="26" height="17" fill="#f7d768" /><path d="M8 25V17H20V25H17V20H11V25Z" fill="#3d8ed8" /></svg></Cell>
    <Cell><svg width="29" height="32" viewBox="0 0 29 32"><path d="M9 8V5C9 1 20 1 20 5V8" fill="none" stroke="#fff" strokeWidth="2" /><rect y="8" width="29" height="24" fill="#fff" /><rect x="9" y="13" width="5" height="5" fill="#f25022" /><rect x="15" y="13" width="5" height="5" fill="#7fba00" /><rect x="9" y="19" width="5" height="5" fill="#00a4ef" /><rect x="15" y="19" width="5" height="5" fill="#ffb900" /></svg></Cell>
    <Cell><svg width="30" height="26" viewBox="0 0 30 26"><path d="M0 9L15 0L30 9V26H0Z" fill="#fff" /><path d="M0 9L30 13L17 18Z" fill="#1f3040" /></svg></Cell>
    <Cell><div className="w-[30px] h-[23px] bg-[#0000f0] flex items-center justify-center text-[15px] leading-none text-white font-['Liberation_Mono',monospace]">isis</div></Cell>
    <Cell><svg width="28" height="28" viewBox="0 0 28 28"><circle cx="14" cy="14" r="14" fill="#d93025" /><path d="M14 14L26.1 21A14 14 0 0 1 2 21Z" fill="#34a853" /><path d="M14 14L14 28A14 14 0 0 0 26.1 7H14Z" fill="#fbbc05" /><circle cx="14" cy="14" r="6.5" fill="#fff" /><circle cx="14" cy="14" r="5" fill="#4285f4" /></svg></Cell>
    <Cell><svg width="28" height="28" viewBox="0 0 28 28"><circle cx="14" cy="14" r="14" fill="#00979c" /><g fill="none" stroke="#fff" strokeWidth="2.2"><circle cx="9" cy="14" r="4" /><circle cx="19" cy="14" r="4" /></g></svg></Cell>
    <Cell><svg width="28" height="32" viewBox="0 0 28 32"><path d="M1 3L13 1V15L1 15Z" fill="#c3302a" /><path d="M15 1L27 0V13L15 15Z" fill="#54b848" /><path d="M1 17H13V31L2 32Z" fill="#c6c22f" /><path d="M15 17L27 15V28L15 31Z" fill="#5830b8" /></svg></Cell>
    <Cell active><Logo s={27} /></Cell>
    <Cell><svg width="24" height="28" viewBox="0 0 24 28"><ellipse cx="12" cy="17" rx="10" ry="9" fill="#2a2a2a" /><ellipse cx="10" cy="10" rx="8" ry="9" fill="#d6342b" /><circle cx="7" cy="9" r="1.4" fill="#661111" /><circle cx="13" cy="12" r="1.4" fill="#661111" /></svg></Cell>
    <Cell><svg width="30" height="26" viewBox="0 0 30 26"><path d="M7 2C14 2 20 7 24 13C20 19 14 24 7 24C10 18 10 8 7 2Z" fill="#fff" stroke="#333" /><path d="M0 9H8M0 17H8M24 13H30" stroke="#37b34a" strokeWidth="2" /></svg></Cell>
    <Cell><svg width="28" height="30" viewBox="0 0 28 30" fill="none"><path d="M14 3A12 12 0 1 1 5 7" stroke="#3fb02d" strokeWidth="3.6" /><path d="M5 7A12 12 0 0 0 6 24" stroke="#3fb02d" strokeWidth="3.6" strokeDasharray="2 1.5" /></svg></Cell>
    <div className="ml-auto flex items-center text-[#f2f2f2]">
      <ChevronUp size={20} strokeWidth={1.3} className="mr-[10px]" />
      <svg width="19" height="11" viewBox="0 0 19 11" className="mr-[10px]"><rect x="0.5" y="0.5" width="16" height="10" fill="none" stroke="#fff" /><rect x="2" y="2" width="10" height="7" fill="#fff" /><rect x="17" y="3" width="2" height="5" fill="#fff" /></svg>
      <svg width="21" height="17" viewBox="0 0 21 17" fill="none" stroke="#eee" className="mr-[13px]"><path d="M1 6H4L8 1.5V15.5L4 11H1Z" /><path d="M11 6C12.5 7.5 12.5 9.5 11 11M14 3.5C17 6.5 17 10.5 14 13.5M17 1C21 5.5 21 11.5 17 16" /></svg>
      <span className="text-[14px] mr-[14px]">ENG</span>
      <div className="w-[72px] flex flex-col items-center text-[14px] leading-[23px] whitespace-nowrap"><span>10:51 AM</span><span>1/29/2020</span></div>
      <div className="w-[67px] flex justify-center pr-[4px]"><svg width="20" height="19" viewBox="0 0 20 19" fill="none" stroke="#fff" strokeWidth="1.2"><path d="M0.6 0.6H19.4V15H13L10 18L7 15H0.6Z" /></svg></div>
      <div className="w-px h-full bg-[#8a93a0]" />
      <div className="w-[4px]" />
    </div>
  </div>
);

export default function App() {
  return (
    <div className="w-[1920px] h-[1080px] overflow-hidden flex flex-col bg-[#343434] font-['Noto_Sans',sans-serif] text-[13px] leading-normal">
      <Title />
      <PathBar />
      <MenuBar />
      <div className="flex h-[907px] shrink-0">
        <LeftPanel />
        <Center />
        <RightPanel />
      </div>
      <Status />
      <Taskbar />
    </div>
  );
}
